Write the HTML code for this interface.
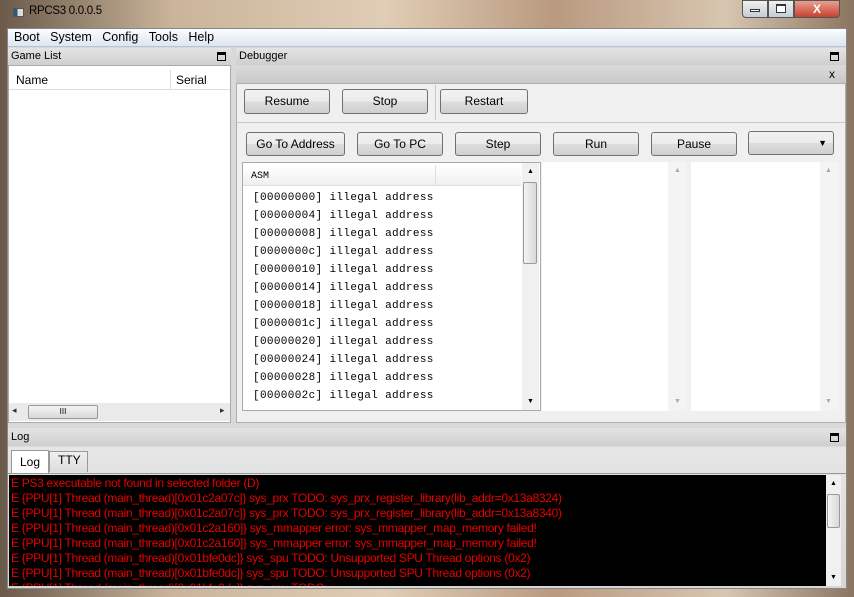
<!DOCTYPE html><html><head><style>
*{margin:0;padding:0;box-sizing:border-box}
body{width:854px;height:597px;overflow:hidden;position:relative;font-family:"Liberation Sans",sans-serif;font-size:12px;color:#000;background:linear-gradient(90deg,#6b5a4a 0,#c9b49a 20%,#e0cdb5 45%,#b99a80 65%,#d8c6b0 85%,#8a7560 100%)}
.a{position:absolute}
.btn{position:absolute;border:1px solid #707070;border-radius:3px;background:linear-gradient(#f2f2f2,#ebebeb 50%,#dddddd 51%,#cfcfcf);text-align:center;font-size:12px;line-height:22px}
.dock{background:linear-gradient(#e4e4e4,#cfcfcf);font-size:11px;padding-left:3px;line-height:17px}
.fl{position:absolute;width:9px;height:9px;border:1px solid #000;border-top-width:3px}
.mono{font-family:"Liberation Mono",monospace;font-size:11px}
.log div{height:15px;line-height:15px;white-space:nowrap}
</style></head><body>
<div class="a" style="left:13px;top:8px;width:11px;height:9px;background:linear-gradient(90deg,#2a5a7a 40%,#ddd 40%);border:1px solid #555"></div>
<div class="a" style="left:29px;top:5px;font-size:11.5px;letter-spacing:-0.3px">RPCS3 0.0.0.5</div>
<div class="a" style="left:742px;top:0;width:26px;height:18px;border:1px solid #555;border-radius:0 0 0 4px;background:linear-gradient(#f0f0f0,#c4ccd6)"></div>
<div class="a" style="left:768px;top:0;width:26px;height:18px;border:1px solid #555;background:linear-gradient(#f0f0f0,#c4ccd6)"></div>
<div class="a" style="left:794px;top:0;width:46px;height:18px;border:1px solid #555;border-radius:0 0 4px 0;background:linear-gradient(#e8a090,#c84030);color:#fff;font-weight:bold;text-align:center;line-height:16px">X</div>
<div class="a" style="left:750px;top:9px;width:10px;height:3px;border:1px solid #333;background:#fff"></div>
<div class="a" style="left:776px;top:4px;width:10px;height:9px;border:1px solid #333;border-top-width:2px;background:#fff"></div>
<div class="a" style="left:7px;top:28px;width:840px;height:561px;background:#d9d9d9;border:1px solid #888"></div>
<div class="a" style="left:8px;top:29px;width:838px;height:18px;background:linear-gradient(#fafcff,#dde6f2);border-bottom:1px solid #b8c4d4"></div>
<div class="a" style="left:14px;top:30px;font-size:12.5px">Boot&nbsp;&nbsp;&nbsp;System&nbsp;&nbsp;&nbsp;Config&nbsp;&nbsp;&nbsp;Tools&nbsp;&nbsp;&nbsp;Help</div>
<div class="a dock" style="left:8px;top:48px;width:223px;height:17px">Game List</div>
<div class="fl" style="left:217px;top:52px"></div>
<div class="a" style="left:8px;top:65px;width:223px;height:358px;background:#fff;border:1px solid #aaa"></div>
<div class="a" style="left:9px;top:70px;width:221px;height:20px;background:#fff;border-bottom:1px solid #ddd"></div>
<div class="a" style="left:16px;top:73px">Name</div>
<div class="a" style="left:170px;top:70px;width:1px;height:20px;background:#ddd"></div>
<div class="a" style="left:176px;top:73px">Serial</div>
<div class="a" style="left:9px;top:403px;width:221px;height:18px;background:#eaeaea"></div>
<div class="a" style="left:12px;top:405px;font-size:9px;color:#333">◂</div>
<div class="a" style="left:220px;top:405px;font-size:9px;color:#333">▸</div>
<div class="a" style="left:28px;top:405px;width:70px;height:14px;border:1px solid #999;border-radius:2px;background:linear-gradient(#f4f4f4,#d8d8d8);font-size:8px;text-align:center;line-height:12px">III</div>
<div class="a dock" style="left:236px;top:48px;width:610px;height:17px">Debugger</div>
<div class="fl" style="left:830px;top:52px"></div>
<div class="a" style="left:236px;top:66px;width:610px;height:17px;background:linear-gradient(#dadada,#c8c8c8)"></div>
<div class="a" style="left:829px;top:67px;font-size:12px">x</div>
<div class="a" style="left:236px;top:83px;width:610px;height:340px;background:#f0f0f0;border:1px solid #b0b0b0"></div>
<div class="btn" style="left:244px;top:89px;width:86px;height:25px">Resume</div>
<div class="btn" style="left:342px;top:89px;width:86px;height:25px">Stop</div>
<div class="a" style="left:435px;top:85px;width:1px;height:35px;background:#c8c8c8"></div>
<div class="btn" style="left:440px;top:89px;width:88px;height:25px">Restart</div>
<div class="a" style="left:237px;top:122px;width:608px;height:1px;background:#c8c8c8"></div>
<div class="btn" style="left:246px;top:132px;width:99px;height:24px">Go To Address</div>
<div class="btn" style="left:357px;top:132px;width:86px;height:24px">Go To PC</div>
<div class="btn" style="left:455px;top:132px;width:86px;height:24px">Step</div>
<div class="btn" style="left:553px;top:132px;width:86px;height:24px">Run</div>
<div class="btn" style="left:651px;top:132px;width:86px;height:24px">Pause</div>
<div class="btn" style="left:748px;top:131px;width:86px;height:24px;text-align:right;padding-right:6px;font-size:9px">▼</div>
<div class="a" style="left:242px;top:162px;width:299px;height:249px;background:#fff;border:1px solid #aaa"></div>
<div class="a mono" style="left:243px;top:165px;width:278px;height:21px;background:linear-gradient(#fff,#f0f0f0);border-bottom:1px solid #ddd;padding:6px 0 0 8px;font-size:10px">ASM</div>
<div class="a" style="left:435px;top:165px;width:1px;height:21px;background:#ddd"></div>
<div class="a" style="left:522px;top:163px;width:17px;height:247px;background:#f0f0f0"></div>
<div class="a" style="left:527px;top:168px;font-size:7px">▲</div>
<div class="a" style="left:527px;top:398px;font-size:7px">▼</div>
<div class="a" style="left:523px;top:182px;width:14px;height:82px;border:1px solid #999;border-radius:2px;background:linear-gradient(90deg,#f4f4f4,#d8d8d8)"></div>
<div class="a mono" style="left:253px;top:189px;line-height:18px;letter-spacing:0.35px">
[00000000] illegal address<br>[00000004] illegal address<br>[00000008] illegal address<br>[0000000c] illegal address<br>[00000010] illegal address<br>[00000014] illegal address<br>[00000018] illegal address<br>[0000001c] illegal address<br>[00000020] illegal address<br>[00000024] illegal address<br>[00000028] illegal address<br>[0000002c] illegal address</div>
<div class="a" style="left:542px;top:162px;width:145px;height:249px;background:#fff"></div>
<div class="a" style="left:668px;top:162px;width:19px;height:249px;background:#f4f4f4"></div>
<div class="a" style="left:674px;top:167px;font-size:7px;color:#aaa">▲</div>
<div class="a" style="left:674px;top:398px;font-size:7px;color:#aaa">▼</div>
<div class="a" style="left:691px;top:162px;width:147px;height:249px;background:#fff"></div>
<div class="a" style="left:820px;top:162px;width:18px;height:249px;background:#f4f4f4"></div>
<div class="a" style="left:825px;top:167px;font-size:7px;color:#aaa">▲</div>
<div class="a" style="left:825px;top:398px;font-size:7px;color:#aaa">▼</div>
<div class="a dock" style="left:8px;top:428px;width:838px;height:18px;line-height:18px">Log</div>
<div class="fl" style="left:830px;top:433px"></div>
<div class="a" style="left:8px;top:447px;width:838px;height:141px;background:linear-gradient(#e6e6e6,#d6d6d6)"></div>
<div class="a" style="left:49px;top:451px;width:39px;height:21px;background:linear-gradient(#f0f0f0,#dcdcdc);border:1px solid #999;border-bottom:none"></div>
<div class="a" style="left:11px;top:450px;width:38px;height:23px;background:#fff;border:1px solid #999;border-bottom:none;text-align:center;line-height:22px">Log</div>
<div class="a" style="left:58px;top:453px">TTY</div>
<div class="a" style="left:8px;top:473px;width:838px;height:1px;background:#999"></div>
<div class="a log" style="left:9px;top:475px;width:817px;height:111px;background:#000;color:#e60000;font-size:12px;padding:1px 0 0 2px;overflow:hidden;letter-spacing:-0.3px">
<div>E PS3 executable not found in selected folder (D)</div>
<div>E {PPU[1] Thread (main_thread)[0x01c2a07c]} sys_prx TODO: sys_prx_register_library(lib_addr=0x13a8324)</div>
<div>E {PPU[1] Thread (main_thread)[0x01c2a07c]} sys_prx TODO: sys_prx_register_library(lib_addr=0x13a8340)</div>
<div>E {PPU[1] Thread (main_thread)[0x01c2a160]} sys_mmapper error: sys_mmapper_map_memory failed!</div>
<div>E {PPU[1] Thread (main_thread)[0x01c2a160]} sys_mmapper error: sys_mmapper_map_memory failed!</div>
<div>E {PPU[1] Thread (main_thread)[0x01bfe0dc]} sys_spu TODO: Unsupported SPU Thread options (0x2)</div>
<div>E {PPU[1] Thread (main_thread)[0x01bfe0dc]} sys_spu TODO: Unsupported SPU Thread options (0x2)</div>
<div>E {PPU[1] Thread (main_thread)[0x01bfe0dc]} sys_spu TODO: ...</div>
</div>
<div class="a" style="left:826px;top:475px;width:15px;height:111px;background:#f0f0f0"></div>
<div class="a" style="left:830px;top:480px;font-size:7px">▲</div>
<div class="a" style="left:830px;top:574px;font-size:7px">▼</div>
<div class="a" style="left:827px;top:494px;width:13px;height:34px;border:1px solid #999;border-radius:2px;background:linear-gradient(90deg,#f4f4f4,#d8d8d8)"></div>
</body></html>
